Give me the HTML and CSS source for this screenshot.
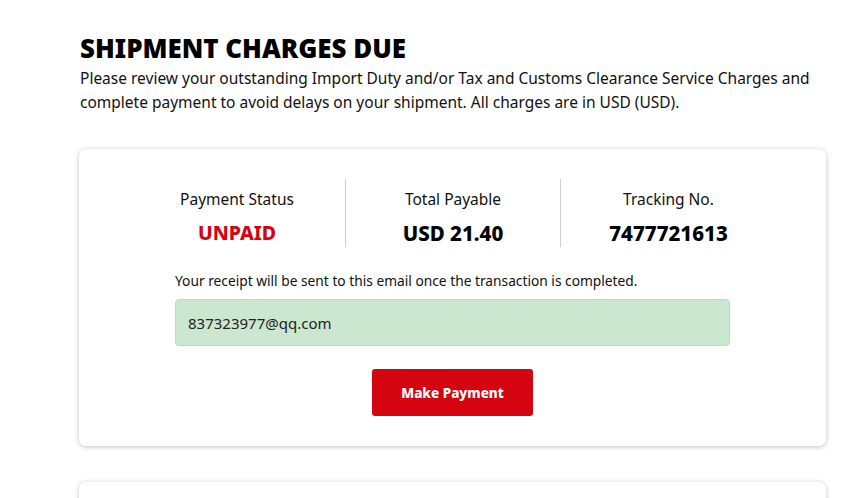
FILE: index.html
```html
<!DOCTYPE html>
<html>
<head>
<meta charset="utf-8">
<link rel="stylesheet" href="styles.css">
</head>
<body>
<main class="page">
  <h1 class="title">SHIPMENT CHARGES DUE</h1>
  <p class="intro">Please review your outstanding Import Duty and/or Tax and Customs Clearance Service Charges and complete payment to avoid delays on your shipment. All charges are in USD (USD).</p>

  <section class="card">
    <div class="summary">
      <div class="col">
        <div class="label">Payment Status</div>
        <div class="value red">UNPAID</div>
      </div>
      <div class="col">
        <div class="label">Total Payable</div>
        <div class="value">USD 21.40</div>
      </div>
      <div class="col">
        <div class="label">Tracking No.</div>
        <div class="value">7477721613</div>
      </div>
    </div>
    <div class="email">
      <div class="note">Your receipt will be sent to this email once the transaction is completed.</div>
      <div class="input">837323977@qq.com</div>
    </div>
    <button class="pay">Make Payment</button>
  </section>

  <section class="card card2"></section>
</main>
</body>
</html>
```

FILE: styles.css
```css
html, body {
  margin: 0;
  padding: 0;
  background: #ffffff;
}
body {
  font-family: "Noto Sans", "Liberation Sans", sans-serif;
  color: #111;
  overflow: hidden;
}
.page {
  padding: 32px 35px 0 79px;
  width: 747px;
}
.title {
  margin: 0 0 0 1px;
  font-family: "Noto Sans", sans-serif;
  font-size: 26px;
  font-weight: 900;
  line-height: 32px;
  transform: scaleX(0.995);
  transform-origin: left;
  color: #000;
}
.intro {
  margin: 2px 0 0 1px;
  font-size: 15.5px;
  line-height: 24px;
  color: #111;
  width: 760px;
}
.card {
  margin-top: 35px;
  background: #fff;
  border-radius: 7px;
  box-shadow: 0 1px 5px rgba(0,0,0,0.25);
  padding: 30px 0 30px;
  display: flex;
  flex-direction: column;
  align-items: center;
  height: 237px;
}
.summary {
  display: grid;
  grid-template-columns: 216px 215px 216px;
}
.col {
  display: flex;
  flex-direction: column;
  align-items: center;
  padding: 9px 0 1px;
  height: 58px;
}
.col + .col {
  border-left: 1px solid #cfcfcf;
}
.label {
  font-size: 15.5px;
  line-height: 22px;
  color: #111;
}
.value {
  margin-top: 11px;
  font-size: 20.5px;
  font-weight: 800;
  line-height: 24px;
  color: #000;
}
.value.red {
  color: #d40511;
  font-size: 19.5px;
}
.email {
  width: 555px;
  margin-top: 24px;
}
.note {
  font-size: 13.75px;
  line-height: 20px;
  color: #111;
}
.input {
  margin-top: 8px;
  box-sizing: border-box;
  height: 47px;
  border: 1px solid #bfd8c2;
  border-radius: 4px;
  background: #cce7cf;
  padding: 0 12px;
  display: flex;
  align-items: center;
  font-size: 15px;
  color: #222;
}
.pay {
  margin-top: 23px;
  width: 161px;
  height: 47px;
  border: none;
  border-radius: 3px;
  background: #d40511;
  color: #fff;
  font-family: "Noto Sans", sans-serif;
  font-size: 13.5px;
  font-weight: 800;
}
.card2 {
  margin-top: 36px;
  height: 60px;
  padding: 0;
}
```
